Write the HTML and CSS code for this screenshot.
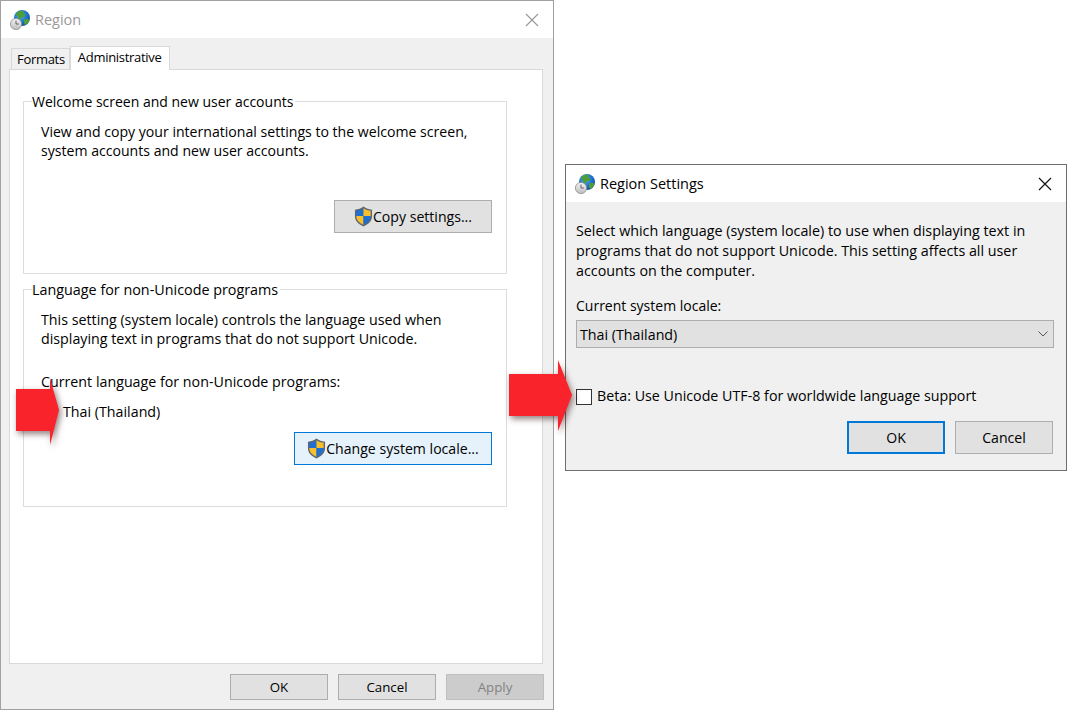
FILE: index.html
```html
<!DOCTYPE html>
<html lang="en">
<head>
<meta charset="utf-8">
<title>Region</title>
<link rel="stylesheet" href="styles.css">
</head>
<body>
<svg class="defs" width="0" height="0" aria-hidden="true">
  <defs>
    <radialGradient id="globe" cx="0.4" cy="0.35" r="0.8">
      <stop offset="0" stop-color="#4fb0f0"/>
      <stop offset="0.6" stop-color="#1a68c4"/>
      <stop offset="1" stop-color="#0f3a86"/>
    </radialGradient>
    <linearGradient id="clock" x1="0" y1="0" x2="0" y2="1">
      <stop offset="0" stop-color="#f4f4f4"/>
      <stop offset="1" stop-color="#bdbdbd"/>
    </linearGradient>
    <symbol id="region-icon" viewBox="0 0 20 20">
      <circle cx="12" cy="8" r="8" fill="url(#globe)"/>
      <path d="M7 2.200c2-1.400 5-1.800 7-1l-.6 2 2 1.400-1 2.400-3 .4-1.200 2.400-2-1.200-.4-2.400-1.600-.6zM14 9.500l3.500-.8 2 1.200c-.6 2.400-2.400 4.400-4.400 5.200l-1.200-2.400z" fill="#4f9f38"/>
      <circle cx="6" cy="14" r="5.600" fill="url(#clock)" stroke="#8d8d8d" stroke-width=".8"/>
      <path d="M6 10.500V14h2.800" fill="none" stroke="#555" stroke-width=".9"/>
    </symbol>
    <symbol id="shield-icon" viewBox="0 0 20 22">
      <path d="M10 .6c2.600 2 5.600 3 9 3.200v7c0 4.800-3.600 8.400-9 10.600C4.600 19.200 1 15.600 1 10.800v-7C4.400 3.600 7.400 2.600 10 .6z" fill="#5f6770"/>
      <path d="M10 2.200V10.500H2.500V4.800C5.300 4.500 7.800 3.600 10 2.200z" fill="#1e6fd0"/>
      <path d="M10 2.200c2.200 1.400 4.700 2.300 7.500 2.600V10.500H10z" fill="#f6bf2e"/>
      <path d="M2.500 10.500H10v9.200C5.500 17.800 2.500 15 2.500 10.800z" fill="#f6bf2e"/>
      <path d="M10 10.500h7.500v.3c0 4.200-3 7-7.500 8.900z" fill="#1e6fd0"/>
    </symbol>
  </defs>
</svg>

<section class="window window-region">
  <header class="titlebar">
    <svg class="app-icon"><use href="#region-icon"/></svg>
    <span class="title title-muted">Region</span>
    <svg class="close close-muted" viewBox="0 0 14 14"><path d="M1 1l12 12M13 1L1 13"/></svg>
  </header>
  <div class="window-body">
    <nav class="tabs">
      <span class="tab">Formats</span>
      <span class="tab tab-active">Administrative</span>
    </nav>
    <div class="panel">
      <fieldset class="group group-welcome">
        <legend class="group-title">Welcome screen and new user accounts</legend>
        <p class="copy copy-narrow">View and copy your international settings to the welcome screen,<br>system accounts and new user accounts.</p>
        <div class="btn-row btn-row-copy">
          <button class="btn btn-copy"><svg class="shield"><use href="#shield-icon"/></svg>Copy settings...</button>
        </div>
      </fieldset>
      <fieldset class="group group-lang">
        <legend class="group-title group-title-wide">Language for non-Unicode programs</legend>
        <p class="copy">This setting (system locale) controls the language used when<br>displaying text in programs that do not support Unicode.</p>
        <p class="copy copy-current">Current language for non-Unicode programs:</p>
        <p class="copy copy-value">Thai (Thailand)</p>
        <div class="btn-row btn-row-change">
          <button class="btn btn-change"><svg class="shield"><use href="#shield-icon"/></svg>Change system locale...</button>
        </div>
      </fieldset>
    </div>
    <footer class="actions">
      <button class="btn btn-action">OK</button>
      <button class="btn btn-action">Cancel</button>
      <button class="btn btn-action btn-disabled">Apply</button>
    </footer>
  </div>
</section>

<section class="window window-settings">
  <header class="titlebar">
    <svg class="app-icon"><use href="#region-icon"/></svg>
    <span class="title">Region Settings</span>
    <svg class="close" viewBox="0 0 14 14"><path d="M1 1l12 12M13 1L1 13"/></svg>
  </header>
  <div class="settings-body">
    <p class="copy copy-intro">Select which language (system locale) to use when displaying text in<br>programs that do not support Unicode. This setting affects all user<br>accounts on the computer.</p>
    <p class="copy locale-label">Current system locale:</p>
    <div class="select">
      <span>Thai (Thailand)</span>
      <svg class="chevron" viewBox="0 0 10 6"><path d="M.5.5L5 5 9.500.5"/></svg>
    </div>
    <label class="check-row"><span class="checkbox"></span><span class="copy">Beta: Use Unicode UTF-8 for worldwide language support</span></label>
    <div class="settings-actions">
      <button class="btn btn-dialog btn-default">OK</button>
      <button class="btn btn-dialog">Cancel</button>
    </div>
  </div>
</section>

<svg class="arrow arrow-left" viewBox="0 0 60 80"><path d="M4 17h34V6l9 32-9 35V59H4z"/></svg>
<svg class="arrow arrow-right" viewBox="0 0 80 90"><path d="M4 19h49V5l14 35-14 36V61H4z"/></svg>
</body>
</html>
```

FILE: styles.css
```css
* { box-sizing: border-box; }

html, body {
  margin: 0;
  width: 1067px;
  height: 710px;
  overflow: hidden;
  background: #fff;
}

body {
  position: relative;
  font-family: "Open Sans", "Noto Sans", sans-serif;
  font-size: 14.250px;
  line-height: 19px;
  color: #000;
}

.defs { position: absolute; }

.window {
  position: absolute;
  display: flex;
  flex-direction: column;
  background: #f0f0f0;
}

.window-region {
  left: 0;
  top: 0;
  width: 554px;
  height: 710px;
  border: 1px solid #a0a0a0;
}

.window-settings {
  left: 565px;
  top: 164px;
  width: 502px;
  height: 307px;
  border: 1px solid #6e6e6e;
}

.titlebar {
  display: flex;
  align-items: center;
  height: 37px;
  padding: 0 14px 0 9px;
  background: #fff;
  flex: none;
}

.app-icon { width: 20px; height: 20px; flex: none; margin-right: 5px; }

.title { font-size: 14.500px; flex: 1; }
.title-muted { color: #9a9a9a; }

.close { width: 14px; height: 14px; fill: none; stroke: #111; stroke-width: 1.200; }
.close-muted { stroke: #9a9a9a; }

.window-body {
  flex: 1;
  display: flex;
  flex-direction: column;
  padding: 7px 9px 9px 8px;
}

.tabs {
  display: flex;
  align-items: flex-end;
  height: 24px;
  padding-left: 2px;
  position: relative;
  z-index: 1;
}

.tab {
  height: 21px;
  padding: 0 4px 0 5px;
  font-size: 13px;
  letter-spacing: -.3px;
  line-height: 21px;
  background: #f0f0f0;
  border: 1px solid #d9d9d9;
  border-bottom: 0;
}

.tab-active {
  height: 24px;
  margin-bottom: -1px;
  padding: 0 8px 0 7px;
  line-height: 21px;
  background: #fff;
}

.panel {
  flex: 1;
  margin-right: 1px;
  background: #fff;
  border: 1px solid #d9d9d9;
  padding: 22px 35px 0 13px;
}

.group {
  margin: 0;
  min-width: 0;
  border: 1px solid #dcdcdc;
  padding: 0 14px 0 17px;
}

.group-welcome { height: 182px; margin-bottom: 6px; }
.group-lang { height: 227px; }

.group-title { margin-left: -9px; padding: 0 2px 0 0; font-size: 14px; line-height: 19px; }
.group-title-wide { font-size: 14.350px; }

.copy { margin: 0; font-size: 14.250px; line-height: 19px; }

.group .copy:first-of-type { margin-top: 11px; }

.copy-narrow { font-size: 14.100px; }
.copy-intro { font-size: 14.300px; line-height: 20px; }
.copy-current { margin-top: 24px; }
.copy-value { margin-top: 11px; padding-left: 22px; }

.btn-row { display: flex; justify-content: flex-end; }
.btn-row-copy { margin-top: 40px; }
.btn-row-change { margin-top: 11px; }

.btn {
  font-family: inherit;
  font-size: 14.100px;
  color: #000;
  background: #e1e1e1;
  border: 1px solid #adadad;
  padding: 0;
  display: flex;
  align-items: center;
  justify-content: center;
}

.btn-copy { width: 158px; height: 33px; }
.btn-change { width: 198px; height: 33px; background: #e5f1fb; border: 1px solid #0078d7; }

.shield { width: 19px; height: 21px; flex: none; }

.actions { display: flex; justify-content: flex-end; gap: 10px; padding-top: 10px; }

.btn-action { width: 98px; height: 26px; font-size: 13.300px; }
.btn-disabled { background: #cccccc; border-color: #bfbfbf; color: #838383; }

.settings-body { flex: 1; padding: 19px 12px 0 10px; }

.locale-label { margin-top: 15px; font-size: 14px; }

.select {
  display: flex;
  align-items: center;
  justify-content: space-between;
  height: 28px;
  margin-top: 5px;
  padding: 0 5px 0 3px;
  background: #e1e1e1;
  border: 1px solid #adadad;
}

.chevron { width: 10px; height: 6px; fill: none; stroke: #555; stroke-width: 1; }

.check-row { display: flex; align-items: flex-start; gap: 5px; margin-top: 38px; }

.checkbox {
  width: 16px;
  height: 16px;
  margin-top: 3px;
  flex: none;
  background: #fff;
  border: 1px solid #333;
}

.settings-actions {
  display: flex;
  justify-content: flex-end;
  gap: 10px;
  margin-top: 16px;
  padding-right: 1px;
}

.btn-dialog { width: 98px; height: 33px; }
.btn-default { border: 2px solid #0078d7; }

.arrow {
  position: absolute;
  fill: #f8232b;
  filter: drop-shadow(2px 3px 3px rgba(60, 20, 20, .55));
}

.arrow-left { left: 12px; top: 372px; width: 60px; height: 80px; }
.arrow-right { left: 505px; top: 355px; width: 80px; height: 90px; }
```
